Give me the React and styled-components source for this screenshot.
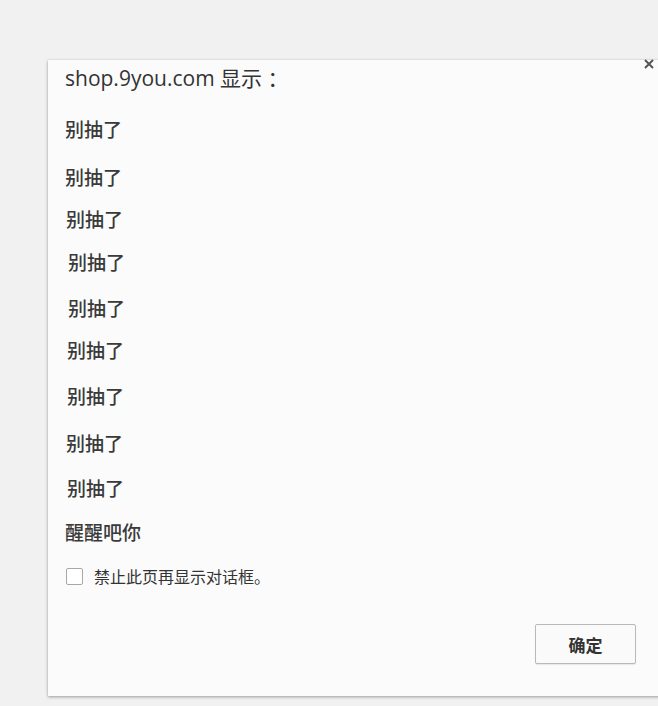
import React from 'react';
import styled, { createGlobalStyle } from 'styled-components';

const GlobalStyle = createGlobalStyle`
  html, body {
    margin: 0;
    padding: 0;
    background: #f1f1f1;
    overflow: hidden;
  }
  body {
    font-family: 'Open Sans', 'Noto Sans CJK SC', sans-serif;
    color: #333;
  }
`;

const Page = styled.div`
  width: 658px;
  height: 706px;
  padding: 60px 0 0 48px;
  box-sizing: border-box;
`;

const Dialog = styled.div`
  position: relative;
  width: 640px;
  height: 636px;
  background: #fbfbfb;
  box-shadow: 0 1px 3px rgba(0, 0, 0, 0.35), 0 0 1px rgba(0, 0, 0, 0.1);
  padding-left: 17px;
  box-sizing: border-box;
  display: flex;
  flex-direction: column;
`;

const Close = styled.button`
  position: absolute;
  top: -3px;
  left: 594px;
  width: 14px;
  height: 14px;
  padding: 0;
  border: 0;
  background: none;
  display: flex;
  align-items: center;
  justify-content: center;
`;

const Title = styled.div`
  margin-top: 6px;
  font-size: 21px;
  line-height: 24px;
  color: #333;
  white-space: pre;
`;

const Message = styled.div`
  margin-top: ${(p) => p.$gap - 24}px;
  padding-left: ${(p) => p.$indent}px;
  font-family: 'Noto Sans CJK SC', sans-serif;
  font-size: 19px;
  font-weight: 500;
  line-height: 24px;
  color: #3a3a3a;
`;

const CheckRow = styled.label`
  margin-top: 20px;
  display: flex;
  align-items: center;
  gap: 11px;
  height: 24px;
  padding-left: 1px;
  font-family: 'Noto Sans CJK SC', sans-serif;
  font-size: 16px;
  color: #333;
`;

const Box = styled.span`
  width: 17px;
  height: 17px;
  border: 1px solid #a8a8a8;
  border-radius: 2px;
  background: #fff;
  box-sizing: border-box;
`;

const Footer = styled.div`
  margin-top: 36px;
  display: flex;
  justify-content: flex-end;
  padding-right: 52px;
`;

const OkButton = styled.button`
  width: 101px;
  height: 40px;
  border: 1px solid #b9b9b9;
  border-radius: 2px;
  background: #fafafa;
  box-shadow: 0 1px 1px rgba(0, 0, 0, 0.08);
  font-family: 'Noto Sans CJK SC', sans-serif;
  font-size: 17px;
  font-weight: 700;
  color: #333;
`;

const messages = [
  { text: '别抽了', gap: 51, indent: 0 },
  { text: '别抽了', gap: 48, indent: -1 },
  { text: '别抽了', gap: 42, indent: 1 },
  { text: '别抽了', gap: 43, indent: 3 },
  { text: '别抽了', gap: 46, indent: 3 },
  { text: '别抽了', gap: 42, indent: 2 },
  { text: '别抽了', gap: 46, indent: 2 },
  { text: '别抽了', gap: 47, indent: 1 },
  { text: '别抽了', gap: 45, indent: 2 },
  { text: '醒醒吧你', gap: 44, indent: 0 },
];

export default function App() {
  return (
    <Page>
      <GlobalStyle />
      <Dialog>
        <Close aria-label="close">
          <svg width="10" height="10" viewBox="0 0 10 10">
            <path d="M1 1 L9 9 M9 1 L1 9" stroke="#555" strokeWidth="2" />
          </svg>
        </Close>
        <Title>shop.9you.com 显示 ：</Title>
        {messages.map((m, i) => (
          <Message key={i} $gap={m.gap} $indent={m.indent}>
            {m.text}
          </Message>
        ))}
        <CheckRow>
          <Box />
          禁止此页再显示对话框。
        </CheckRow>
        <Footer>
          <OkButton>确定</OkButton>
        </Footer>
      </Dialog>
    </Page>
  );
}
